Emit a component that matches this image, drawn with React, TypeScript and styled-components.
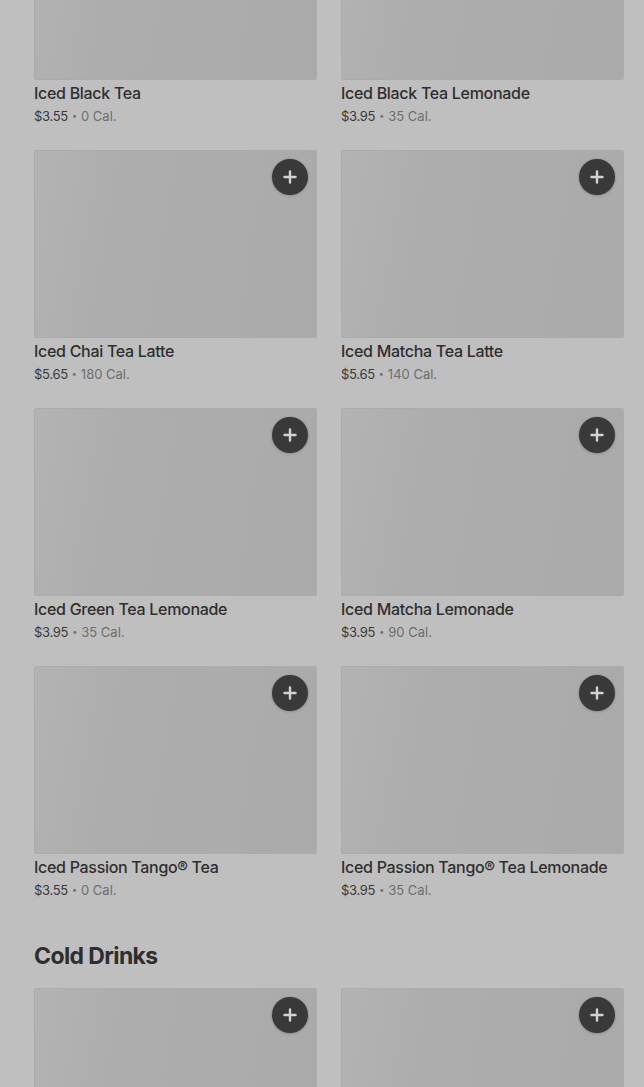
import styled, { createGlobalStyle } from "styled-components";

const GlobalStyle = createGlobalStyle`
  html, body {
    margin: 0;
    padding: 0;
    background: #bfbfbf;
    font-family: Inter, "Liberation Sans", sans-serif;
    -webkit-font-smoothing: antialiased;
  }
`;

interface Drink {
  name: string;
  price: string;
  cal: string;
}

const teas: Drink[] = [
  { name: "Iced Black Tea", price: "$3.55", cal: "0 Cal." },
  { name: "Iced Black Tea Lemonade", price: "$3.95", cal: "35 Cal." },
  { name: "Iced Chai Tea Latte", price: "$5.65", cal: "180 Cal." },
  { name: "Iced Matcha Tea Latte", price: "$5.65", cal: "140 Cal." },
  { name: "Iced Green Tea Lemonade", price: "$3.95", cal: "35 Cal." },
  { name: "Iced Matcha Lemonade", price: "$3.95", cal: "90 Cal." },
  { name: "Iced Passion Tango® Tea", price: "$3.55", cal: "0 Cal." },
  { name: "Iced Passion Tango® Tea Lemonade", price: "$3.95", cal: "35 Cal." },
];

const coldDrinks: Drink[] = [
  { name: "Cold Drink", price: "", cal: "" },
  { name: "Cold Drink", price: "", cal: "" },
];

function PlusIcon() {
  return (
    <svg width="14" height="14" viewBox="0 0 14 14">
      <path
        d="M7 1.5v11M1.5 7h11"
        stroke="#d2d2d2"
        strokeWidth="2.4"
        strokeLinecap="round"
      />
    </svg>
  );
}

function DrinkCard({ drink, showInfo = true }: { drink: Drink; showInfo?: boolean }) {
  return (
    <Card>
      <Thumb>
        <AddButton aria-label={`Add ${drink.name}`}>
          <PlusIcon />
        </AddButton>
      </Thumb>
      {showInfo && (
        <>
          <Name>{drink.name}</Name>
          <Meta>
            <Price>{drink.price}</Price>
            <Dot>•</Dot>
            <Cal>{drink.cal}</Cal>
          </Meta>
        </>
      )}
    </Card>
  );
}

export default function App() {
  return (
    <>
      <GlobalStyle />
      <Viewport>
        <Scroller>
          <Grid>
            {teas.map((t, i) => (
              <DrinkCard key={i} drink={t} />
            ))}
          </Grid>
          <SectionTitle>Cold Drinks</SectionTitle>
          <Grid>
            {coldDrinks.map((t, i) => (
              <DrinkCard key={i} drink={t} showInfo={false} />
            ))}
          </Grid>
        </Scroller>
      </Viewport>
    </>
  );
}

const Viewport = styled.div`
  height: 1087px;
  overflow: hidden;
`;

// page is scrolled: the first row of images is partly above the fold
const Scroller = styled.div`
  margin-top: -108px;
  padding: 0 20px 0 34px;
`;

const Grid = styled.div`
  display: grid;
  grid-template-columns: 283px 283px;
  column-gap: 24px;
  row-gap: 24px;
`;

const Card = styled.div`
  display: flex;
  flex-direction: column;
`;

const Thumb = styled.div`
  position: relative;
  height: 188px;
  box-sizing: border-box;
  border: 1px solid #ababab;
  border-radius: 2px;
  background: linear-gradient(100deg, #b3b3b3 0%, #adadad 30%, #aaaaaa 100%);
`;

const AddButton = styled.button`
  position: absolute;
  top: 8px;
  right: 8px;
  width: 36px;
  height: 36px;
  border-radius: 50%;
  border: none;
  padding: 0;
  background: #393939;
  box-shadow: 0 0 0 1px rgba(0, 0, 0, 0.05), 0 1px 3px rgba(0, 0, 0, 0.15);
  display: flex;
  align-items: center;
  justify-content: center;
  cursor: pointer;
`;

const Name = styled.div`
  margin-top: 1px;
  font-size: 16px;
  line-height: 24px;
  font-weight: 500;
  color: #2f2f2f;
  letter-spacing: -0.3px;
`;

const Meta = styled.div`
  display: flex;
  align-items: center;
  gap: 4px;
  margin-top: 1px;
  font-size: 13px;
  line-height: 20px;
`;

const Price = styled.span`
  color: #3a3a3a;
  letter-spacing: -0.3px;
`;

const Dot = styled.span`
  color: #6e6e6e;
  font-size: 9px;
`;

const Cal = styled.span`
  color: #6e6e6e;
`;

const SectionTitle = styled.h2`
  margin: 40px 0 16px 0;
  font-size: 23px;
  line-height: 32px;
  font-weight: 700;
  color: #2e2e2e;
  letter-spacing: -0.6px;
`;
